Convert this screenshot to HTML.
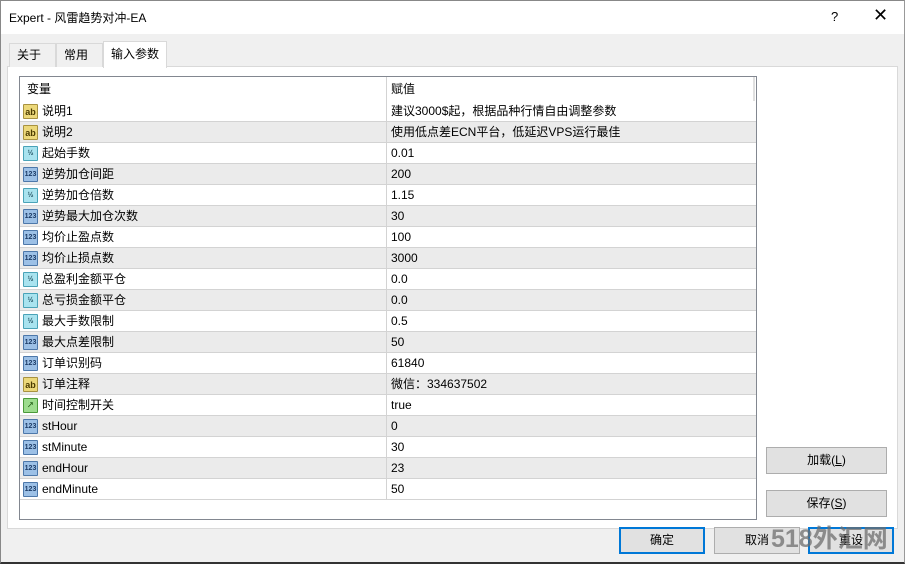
<!DOCTYPE html>
<html style="overflow:hidden;width:905px;height:564px"><head><meta charset="utf-8"><style>
*{margin:0;padding:0;box-sizing:border-box}
body{width:905px;height:564px;background:#f0f0f0;font-family:"Liberation Sans","Noto Sans CJK SC",sans-serif;font-size:12px;color:#000;position:relative;overflow:hidden;white-space:nowrap}
.a{position:absolute}
.title{left:0;top:0;width:905px;height:34px;background:#fff}
.frame{left:0;top:0;width:905px;height:564px;border:1px solid #888;border-bottom:2px solid #333;border-right:1px solid #999}
.tab{top:43px;height:24px;border:1px solid #d9d9d9;border-bottom:none;background:#f0f0f0;line-height:22px;padding-left:7px}
.panel{left:7px;top:66px;width:891px;height:463px;background:#fff;border:1px solid #d9d9d9}
.tbl{left:19px;top:76px;width:738px;height:444px;border:1px solid #828790;background:#fff}
.row{position:absolute;left:0;width:736px;height:21px;border-bottom:1px solid #d3d3d3;line-height:21px}
.row.g{background:#ebebeb}
.row .n{position:absolute;left:22px}
.row .v{position:absolute;left:371px}
.row .d{position:absolute;left:366px;top:0;width:1px;height:20px;background:#d3d3d3}
.ic{position:absolute;left:3px;top:3px;width:15px;height:15px;border-radius:1px;font-size:7px;line-height:14px;text-align:center;font-weight:bold}
.ab{background:#ecd87a;border:1px solid #a89240;color:#4a3a00;font-size:9px}
.fr{background:#a9e3ef;border:1px solid #4aa3b8;color:#205060}
.nm{background:#9cc0e6;border:1px solid #4d78aa;color:#1c3b66}
.bo{background:#9ddc8e;border:1px solid #4b9a3a;color:#1c5a10}
.btn{height:27px;background:#e1e1e1;border:1px solid #adadad;text-align:center;line-height:25px}
.btn.p{border:2px solid #0078d7;line-height:23px}
</style></head><body>
<div class="a title"></div>
<div class="a" style="left:9px;top:9px;font-size:12px">Expert - 风雷趋势对冲-EA</div>
<div class="a" style="left:831px;top:9px;font-size:13px">?</div>
<div class="a" style="left:873px;top:5px;font-size:18px;font-weight:300">✕</div>
<div class="a panel"></div>
<div class="a tab" style="left:9px;width:47px">关于</div>
<div class="a tab" style="left:56px;width:47px">常用</div>
<div class="a tab" style="left:103px;width:64px;top:41px;height:27px;background:#fff;line-height:24px">输入参数</div>
<div class="a tbl">
<div class="row" style="top:0;height:24px;line-height:24px;border-bottom:none"><span class="n" style="left:7px">变量</span><span class="d" style="height:24px"></span><span class="v">赋值</span></div>
<div style="position:absolute;left:733px;top:0;width:2px;height:24px;background:#e0e0e0"></div>
<div class="row" style="top:24px"><span class="ic ab">ab</span><span class="n">说明1</span><span class="d"></span><span class="v">建议3000$起，根据品种行情自由调整参数</span></div>
<div class="row g" style="top:45px"><span class="ic ab">ab</span><span class="n">说明2</span><span class="d"></span><span class="v">使用低点差ECN平台，低延迟VPS运行最佳</span></div>
<div class="row" style="top:66px"><span class="ic fr">½</span><span class="n">起始手数</span><span class="d"></span><span class="v">0.01</span></div>
<div class="row g" style="top:87px"><span class="ic nm">123</span><span class="n">逆势加仓间距</span><span class="d"></span><span class="v">200</span></div>
<div class="row" style="top:108px"><span class="ic fr">½</span><span class="n">逆势加仓倍数</span><span class="d"></span><span class="v">1.15</span></div>
<div class="row g" style="top:129px"><span class="ic nm">123</span><span class="n">逆势最大加仓次数</span><span class="d"></span><span class="v">30</span></div>
<div class="row" style="top:150px"><span class="ic nm">123</span><span class="n">均价止盈点数</span><span class="d"></span><span class="v">100</span></div>
<div class="row g" style="top:171px"><span class="ic nm">123</span><span class="n">均价止损点数</span><span class="d"></span><span class="v">3000</span></div>
<div class="row" style="top:192px"><span class="ic fr">½</span><span class="n">总盈利金额平仓</span><span class="d"></span><span class="v">0.0</span></div>
<div class="row g" style="top:213px"><span class="ic fr">½</span><span class="n">总亏损金额平仓</span><span class="d"></span><span class="v">0.0</span></div>
<div class="row" style="top:234px"><span class="ic fr">½</span><span class="n">最大手数限制</span><span class="d"></span><span class="v">0.5</span></div>
<div class="row g" style="top:255px"><span class="ic nm">123</span><span class="n">最大点差限制</span><span class="d"></span><span class="v">50</span></div>
<div class="row" style="top:276px"><span class="ic nm">123</span><span class="n">订单识别码</span><span class="d"></span><span class="v">61840</span></div>
<div class="row g" style="top:297px"><span class="ic ab">ab</span><span class="n">订单注释</span><span class="d"></span><span class="v">微信：334637502</span></div>
<div class="row" style="top:318px"><span class="ic bo">↗</span><span class="n">时间控制开关</span><span class="d"></span><span class="v">true</span></div>
<div class="row g" style="top:339px"><span class="ic nm">123</span><span class="n">stHour</span><span class="d"></span><span class="v">0</span></div>
<div class="row" style="top:360px"><span class="ic nm">123</span><span class="n">stMinute</span><span class="d"></span><span class="v">30</span></div>
<div class="row g" style="top:381px"><span class="ic nm">123</span><span class="n">endHour</span><span class="d"></span><span class="v">23</span></div>
<div class="row" style="top:402px"><span class="ic nm">123</span><span class="n">endMinute</span><span class="d"></span><span class="v">50</span></div>
</div>
<div class="a btn" style="left:766px;top:447px;width:121px">加载(<u>L</u>)</div>
<div class="a btn" style="left:766px;top:490px;width:121px">保存(<u>S</u>)</div>
<div class="a btn p" style="left:619px;top:527px;width:86px">确定</div>
<div class="a btn" style="left:714px;top:527px;width:86px">取消</div>
<div class="a btn p" style="left:808px;top:527px;width:86px">重设</div>
<div class="a" style="left:771px;top:524px;font-size:25px;line-height:30px;font-weight:bold;color:rgba(110,110,110,0.75);white-space:nowrap">518外汇网</div>
<div class="a frame"></div>
</body></html>
